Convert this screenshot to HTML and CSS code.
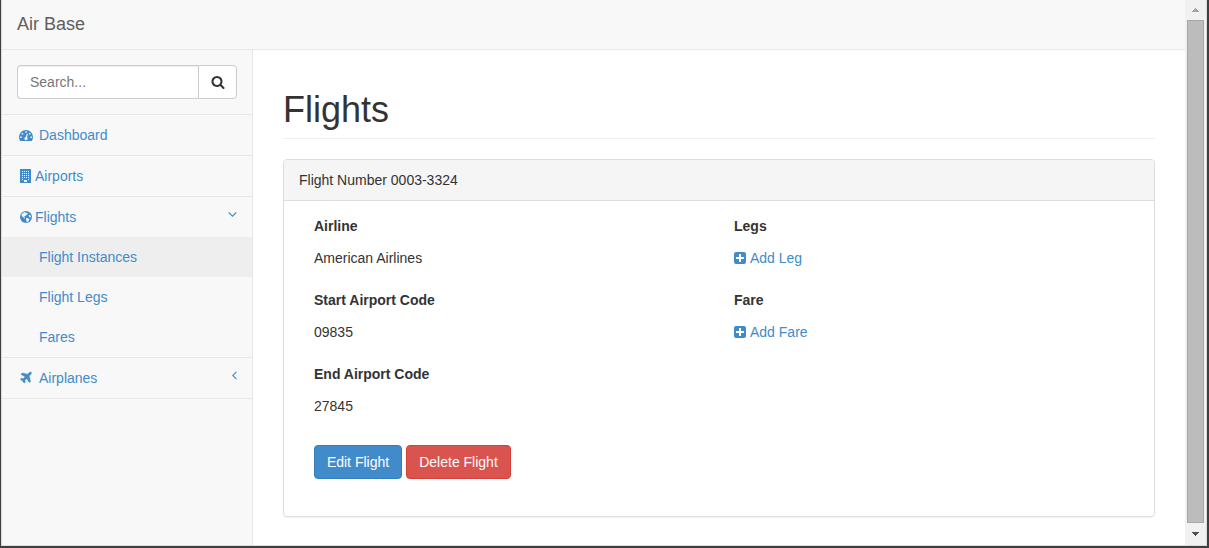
FILE: index.html
```html
<!DOCTYPE html>
<html lang="en">
<head>
<meta charset="utf-8">
<title>Air Base</title>
<link rel="stylesheet" href="styles.css">
</head>
<body>
<div class="window">
  <div class="page">
    <nav class="navbar"><a class="brand">Air Base</a></nav>
    <div class="main">
      <aside class="sidebar">
        <div class="search">
          <input class="search-input" type="text" placeholder="Search...">
          <button class="search-btn" aria-label="Search"><svg class="icon" viewBox="0 0 1792 1792"><path d="M1216 832q0-185-131.500-316.500t-316.500-131.500-316.500 131.500-131.500 316.500 131.500 316.500 316.500 131.500 316.500-131.500 131.500-316.500zm512 832q0 52-38 90t-90 38q-54 0-90-38l-343-342q-179 124-399 124-143 0-273.500-55.500t-225-150-150-225-55.500-273.500 55.500-273.500 150-225 225-150 273.500-55.500 273.500 55.500 225 150 150 225 55.500 273.500q0 220-124 399l343 343q37 37 37 90z"/></svg></button>
        </div>
        <a class="item"><svg class="icon nav-icon gap" viewBox="0 0 14 14"><path fill-rule="evenodd" d="M0 9a7 7 0 0 1 14 0q0 2.200-1.100 4H1.100Q0 11.200 0 9zM1.200 8.500h1.500V10H1.200zM2.700 5h1.500v1.500H2.700zM6.300 3.300h1.500v1.500H6.300zM9.900 5h1.500v1.500H9.900zM11.400 8.500h1.500V10h-1.500zM7.900 5.800 6.800 8.900a1.600 1.600 0 1 0 1.300.4L8.900 6z"/></svg>Dashboard</a>
        <a class="item"><svg class="icon nav-icon" viewBox="0 0 14 14"><path fill-rule="evenodd" d="M1 0h11v14H1zM3 2h1v1H3zM5 2h1v1H5zM7 2h1v1H7zM9 2h1v1H9zM3 4h1v1H3zM5 4h1v1H5zM7 4h1v1H7zM9 4h1v1H9zM3 6h1v1H3zM5 6h1v1H5zM7 6h1v1H7zM9 6h1v1H9zM3 8h1v1H3zM5 8h1v1H5zM7 8h1v1H7zM9 8h1v1H9zM3 10h1v1H3zM9 10h1v1H9zM5 11h3v2H5z"/></svg>Airports</a>
        <a class="item"><svg class="icon nav-icon" viewBox="0 0 14 14"><circle cx="7" cy="7" r="6"/><path class="land" d="M3.300 3.500 5.300 2.300 6.600 2 6.200 3l1.600-.3 1.200.8-1.200 1-1 1.200-1.300.6-.3 1 1.200.8-.7.500-1.500-1.300L3 6.200 2.500 4.800zM7 8.300l1.300-.3 2 1.100-.4 1.300-1.100 1.400-1.100.4-.3-1.900zM9.500 5.500l1-.8 1.400 1.200-.1 1.600-1.300-.6z"/></svg>Flights<svg class="arrow" viewBox="0 0 9 9"><path d="M.8 2.500 4.500 6.200 8.200 2.500"/></svg></a>
        <div class="submenu">
          <a class="subitem active">Flight Instances</a>
          <a class="subitem">Flight Legs</a>
          <a class="subitem">Fares</a>
        </div>
        <a class="item"><svg class="icon nav-icon gap plane" viewBox="0 0 1792 1792"><path d="M1568 160q44 52 12 148t-108 172l-161 161 160 696q5 19-12 33l-128 96q-7 6-19 6-4 0-7-1-15-3-21-16l-279-508-259 259 53 194q5 17-8 31l-96 96q-9 9-23 9h-2q-15-2-24-13l-189-252-252-189q-11-7-13-23-1-13 9-25l96-97q9-9 23-9 6 0 8 1l194 53 259-259-508-279q-14-8-17-24-2-16 9-27l128-128q14-13 30-8l665 159 160-160q76-76 172-108t148 12z"/></svg>Airplanes<svg class="arrow left" viewBox="0 0 9 9"><path d="M8.500.8 4.800 4.500 8.500 8.200"/></svg></a>
      </aside>
      <main class="content">
        <h1 class="title">Flights</h1>
        <section class="panel">
          <div class="panel-heading">Flight Number 0003-3324</div>
          <div class="panel-body">
            <div class="columns">
              <dl class="fields">
                <dt>Airline</dt><dd>American Airlines</dd>
                <dt>Start Airport Code</dt><dd>09835</dd>
                <dt>End Airport Code</dt><dd>27845</dd>
              </dl>
              <dl class="fields">
                <dt>Legs</dt><dd><a class="add"><svg class="plus" viewBox="0 0 12 12"><path fill-rule="evenodd" d="M2 0h8a2 2 0 0 1 2 2v8a2 2 0 0 1-2 2H2a2 2 0 0 1-2-2V2a2 2 0 0 1 2-2zM5 2v3H2v2h3v3h2V7h3V5H7V2z"/></svg>Add Leg</a></dd>
                <dt>Fare</dt><dd><a class="add"><svg class="plus" viewBox="0 0 12 12"><path fill-rule="evenodd" d="M2 0h8a2 2 0 0 1 2 2v8a2 2 0 0 1-2 2H2a2 2 0 0 1-2-2V2a2 2 0 0 1 2-2zM5 2v3H2v2h3v3h2V7h3V5H7V2z"/></svg>Add Fare</a></dd>
              </dl>
            </div>
            <div class="actions">
              <button class="btn primary">Edit Flight</button>
              <button class="btn danger">Delete Flight</button>
            </div>
          </div>
        </section>
      </main>
    </div>
  </div>
  <div class="scrollbar">
    <svg class="scroll-arrow up" viewBox="0 0 7 4" shape-rendering="crispEdges"><path d="M3 0h1v1h1v1h1v1h1v1H0V3h1V2h1V1h1z"/></svg>
    <div class="thumb"></div>
    <svg class="scroll-arrow" viewBox="0 0 7 4" shape-rendering="crispEdges"><path d="M0 0h7v1H6v1H5v1H4v1H3V3H2V2H1V1H0z"/></svg>
  </div>
</div>
</body>
</html>
```

FILE: styles.css
```css
* { box-sizing: border-box; }
body {
  margin: 0;
  height: 548px;
  overflow: hidden;
  background: #403f40;
  color: #333;
  font: 14px/20px "Liberation Sans", Arial, sans-serif;
}
.window {
  display: flex;
  height: 546px;
  margin: 0 2px 0 1px;
  border: solid #dcdcdc;
  border-width: 0 1px 1px;
  background: #fff;
}
.page { flex: 1; display: flex; flex-direction: column; }
.navbar {
  height: 50px;
  padding: 14px 15px;
  border-bottom: 1px solid #e7e7e7;
  background: #f8f8f8;
}
.brand { color: #5e5e5e; font-size: 18px; }
.main { flex: 1; display: flex; min-height: 0; }
.sidebar {
  width: 251px;
  border-right: 1px solid #e7e7e7;
  background: #f8f8f8;
}
.search {
  display: flex;
  padding: 15px;
  border-bottom: 1px solid #e7e7e7;
}
.search-input {
  width: 181px;
  height: 34px;
  padding: 6px 12px;
  border: 1px solid #ccc;
  border-right: 0;
  border-radius: 4px 0 0 4px;
  box-shadow: inset 0 1px 1px rgba(0, 0, 0, .075);
  font: inherit;
}
.search-input::placeholder { color: #777; opacity: 1; }
.search-btn {
  display: flex;
  align-items: center;
  justify-content: center;
  width: 39px;
  height: 34px;
  padding: 0;
  border: 1px solid #ccc;
  border-radius: 0 4px 4px 0;
  background: #fff;
  color: #333;
}
.icon { width: 14px; height: 14px; fill: currentColor; }
.item {
  display: flex;
  align-items: center;
  height: 41px;
  padding: 0 15px;
  border-bottom: 1px solid #e7e7e7;
  color: #428bca;
}
.nav-icon { margin: 0 2px; }
.nav-icon.gap { margin-right: 6px; }
.plane { stroke: currentColor; stroke-width: 60; }
.land { fill: #f8f8f8; }
.arrow {
  width: 9px;
  height: 9px;
  margin: -5px 0 0 auto;
  fill: none;
  stroke: currentColor;
  stroke-width: 1.1;
}
.item:has(+ .submenu) { height: 40px; border-bottom: 0; }
.submenu { border-bottom: 1px solid #e7e7e7; }
.subitem {
  display: block;
  height: 40px;
  padding: 10px 10px 10px 37px;
  color: #428bca;
}
.subitem.active { background: #eee; }
.content { flex: 1; padding: 40px 30px 0; }
.title {
  margin: 0 0 20px;
  padding-bottom: 8px;
  border-bottom: 1px solid #eee;
  font-size: 36px;
  font-weight: 500;
  line-height: 40px;
}
.panel {
  height: 358px;
  border: 1px solid #ddd;
  border-radius: 4px;
  box-shadow: 0 1px 1px rgba(0, 0, 0, .05);
}
.panel-heading {
  padding: 10px 15px;
  border-bottom: 1px solid #ddd;
  border-radius: 3px 3px 0 0;
  background: #f5f5f5;
}
.panel-body { padding: 15px 30px; }
.columns { display: grid; grid-template-columns: 420px 1fr; }
.fields { margin: 0; }
.fields dt { margin-bottom: 12px; font-weight: bold; }
.fields dd { margin: 0 0 22px; }
.add { display: flex; align-items: center; color: #428bca; }
.plus { width: 12px; height: 12px; margin-right: 4px; fill: currentColor; }
.actions { display: flex; gap: 4px; margin-top: 7px; }
.btn {
  height: 34px;
  padding: 6px 0;
  border: 1px solid;
  border-radius: 4px;
  color: #fff;
  font: inherit;
  white-space: nowrap;
}
.primary { width: 88px; border-color: #357ebd; background: #428bca; }
.danger { width: 105px; border-color: #d43f3a; background: #d9534f; }
.scrollbar {
  display: flex;
  flex-direction: column;
  align-items: center;
  justify-content: space-between;
  width: 21px;
  padding: 8px 0 9px;
  background: #f1f1f1;
}
.scroll-arrow { width: 7px; height: 4px; fill: #505050; }
.scroll-arrow.up { fill: #a3a3a3; }
.thumb {
  width: 17px;
  height: 503px;
  margin-bottom: 2px;
  border: 1px solid #a8a8a8;
  background: #bcbcbc;
}
```
